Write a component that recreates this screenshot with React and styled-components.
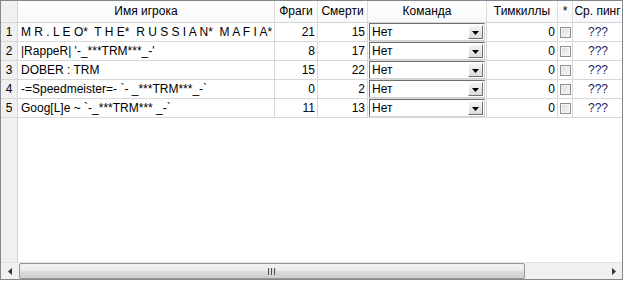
import styled, { createGlobalStyle } from "styled-components";

const GlobalStyle = createGlobalStyle`
  html, body { margin: 0; padding: 0; background: #fff; }
  body { font-family: "Liberation Sans", Arial, sans-serif; font-size: 12px; color: #000; }
`;

const COLS = "17px 257px 43px 50px 119px 71px 15px 50px";

const players = [
  { id: 1, name: "M R . L E O*  T H E*  R U S S I A N*  M A F I A*", frags: 21, deaths: 15 },
  { id: 2, name: "|RappeR| '-_***TRM***_-'", frags: 8, deaths: 17 },
  { id: 3, name: "DOBER : TRM", frags: 15, deaths: 22 },
  { id: 4, name: "-=Speedmeister=- `- _***TRM***_-`", frags: 0, deaths: 2 },
  { id: 5, name: "Goog[L]e ~ `-_***TRM*** _-`", frags: 11, deaths: 13 },
];

const App = () => {
  return (
    <>
      <GlobalStyle />
      <Frame>
        <HeaderRow>
          <Corner />
          <HeadCell>Имя игрока</HeadCell>
          <HeadCell>Фраги</HeadCell>
          <HeadCell>Смерти</HeadCell>
          <HeadCell>Команда</HeadCell>
          <HeadCell>Тимкиллы</HeadCell>
          <HeadCell>*</HeadCell>
          <HeadCell>Ср. пинг</HeadCell>
        </HeaderRow>
        {players.map((p) => (
          <Row key={p.id}>
            <RowNum>{p.id}</RowNum>
            <Cell>{p.name}</Cell>
            <Cell $align="right">{p.frags}</Cell>
            <Cell $align="right">{p.deaths}</Cell>
            <ComboCell>
              <Combo>
                <ComboText>Нет</ComboText>
                <ComboButton>
                  <svg width="7" height="4" viewBox="0 0 7 4">
                    <path d="M0 0h7L3.5 4z" fill="#000" />
                  </svg>
                </ComboButton>
              </Combo>
            </ComboCell>
            <Cell $align="right">0</Cell>
            <CheckCell>
              <CheckBox />
            </CheckCell>
            <Cell $align="center" $color="#1c1c60">???</Cell>
          </Row>
        ))}
        <Filler>
          <FillerSide />
        </Filler>
        <ScrollBar>
          <ArrowButton>
            <svg width="4" height="7" viewBox="0 0 4 7">
              <path d="M4 0v7L0 3.5z" fill="#333" />
            </svg>
          </ArrowButton>
          <Track>
            <Thumb>
              <Grip>
                <i />
                <i />
                <i />
              </Grip>
            </Thumb>
          </Track>
          <ArrowButton>
            <svg width="4" height="7" viewBox="0 0 4 7">
              <path d="M0 0v7L4 3.5z" fill="#333" />
            </svg>
          </ArrowButton>
        </ScrollBar>
      </Frame>
    </>
  );
};

const Frame = styled.div`
  width: 621px;
  height: 278px;
  border: 1px solid #828790;
  display: flex;
  flex-direction: column;
  overflow: hidden;
  background: #fff;
`;

const HeaderRow = styled.div`
  display: grid;
  grid-template-columns: ${COLS};
  height: 22px;
  border-bottom: 1px solid #d5d5d5;
  background: linear-gradient(#ffffff, #f7f8fa);
  box-sizing: border-box;
`;

const Corner = styled.div`
  background: #f0f0f0;
  border-right: 1px solid #d5d5d5;
`;

const HeadCell = styled.div`
  display: flex;
  align-items: center;
  justify-content: center;
  border-right: 1px solid #dcdcdc;
  white-space: nowrap;
  overflow: hidden;
  padding-bottom: 1px;
`;

const Row = styled.div`
  display: grid;
  grid-template-columns: ${COLS};
  height: 19px;
  border-bottom: 1px solid #d8d8d8;
  box-sizing: border-box;
`;

const RowNum = styled.div`
  background: #f0f0f0;
  border-right: 1px solid #d5d5d5;
  display: flex;
  align-items: center;
  justify-content: center;
`;

const Cell = styled.div`
  display: flex;
  align-items: center;
  justify-content: ${(p) =>
    p.$align === "right" ? "flex-end" : p.$align === "center" ? "center" : "flex-start"};
  padding: 0 2px 0 3px;
  border-right: 1px solid #d8d8d8;
  white-space: pre;
  overflow: hidden;
  color: ${(p) => p.$color || "#000"};
`;

const ComboCell = styled.div`
  border-right: 1px solid #d8d8d8;
  padding: 0 1px 0 1px;
  display: flex;
  align-items: stretch;
`;

const Combo = styled.div`
  flex: 1;
  display: flex;
  border: 1px solid #6e6e6e;
  border-right-color: #d0d0d0;
  border-bottom-color: #d0d0d0;
  background: #fff;
`;

const ComboText = styled.span`
  flex: 1;
  display: flex;
  align-items: center;
  padding-left: 2px;
`;

const ComboButton = styled.span`
  width: 15px;
  margin: 1px;
  display: flex;
  align-items: center;
  justify-content: center;
  background: linear-gradient(#f4f4f4, #dcdcdc);
  border: 1px solid #fff;
  border-right-color: #707070;
  border-bottom-color: #707070;
  padding-top: 2px;
  box-sizing: border-box;
`;

const CheckCell = styled.div`
  border-right: 1px solid #d8d8d8;
  display: flex;
  align-items: center;
  justify-content: center;
`;

const CheckBox = styled.span`
  width: 11px;
  height: 11px;
  box-sizing: border-box;
  border: 1px solid #8f8f8f;
  background: linear-gradient(135deg, #dcdcdc, #f6f6f6);
  box-shadow: inset 0 0 0 1px #f4f4f4;
`;

const Filler = styled.div`
  flex: 1;
  display: flex;
`;

const FillerSide = styled.div`
  width: 17px;
  background: #f0f0f0;
  border-right: 1px solid #d5d5d5;
  box-sizing: border-box;
`;

const ScrollBar = styled.div`
  height: 17px;
  display: flex;
  background: #f0f0f0;
  border-top: 1px solid #e3e3e3;
  box-sizing: border-box;
`;

const ArrowButton = styled.div`
  width: 17px;
  display: flex;
  align-items: center;
  justify-content: center;
`;

const Track = styled.div`
  flex: 1;
  display: flex;
  padding: 0 1px;
`;

const Thumb = styled.div`
  width: 506px;
  box-sizing: border-box;
  border: 1px solid #979797;
  border-radius: 2px;
  background: linear-gradient(#f3f3f3 0%, #ececec 45%, #dcdcdc 55%, #cfcfcf 100%);
  display: flex;
  align-items: center;
  justify-content: center;
`;

const Grip = styled.span`
  display: flex;
  gap: 1px;
  i {
    width: 2px;
    height: 7px;
    background: linear-gradient(90deg, #4d4d4d 50%, #d8d8d8 50%);
  }
`;

export default App;
